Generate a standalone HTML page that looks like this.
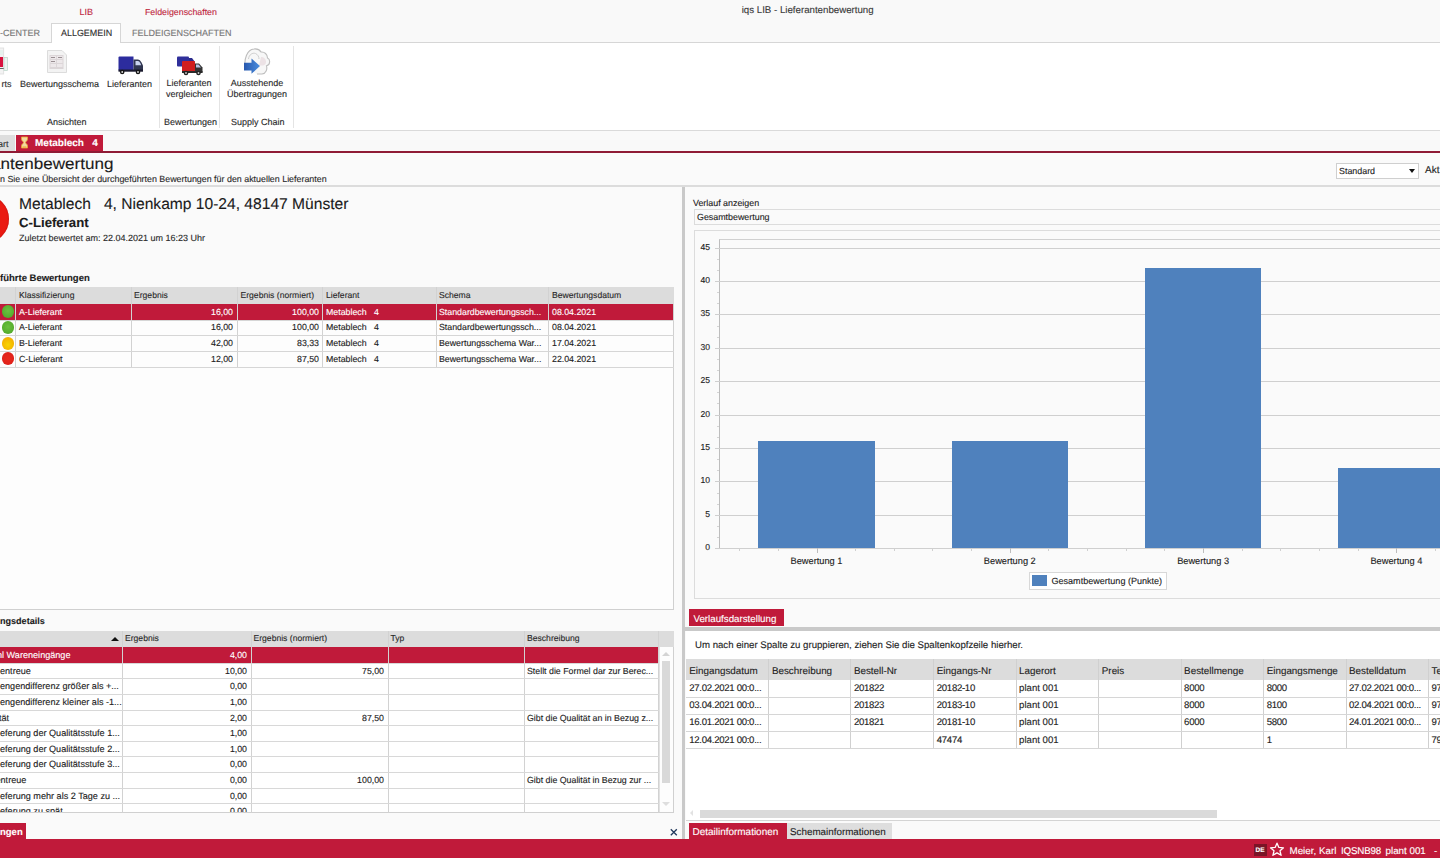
<!DOCTYPE html>
<html><head><meta charset="utf-8">
<style>
*{box-sizing:border-box;margin:0;padding:0}
html,body{width:1440px;height:858px;overflow:hidden}
body{position:relative;background:#fafafa;font-family:"Liberation Sans",sans-serif;color:#222;font-size:9px;line-height:1.15}
.a{position:absolute;white-space:nowrap;text-rendering:geometricPrecision;-webkit-text-stroke:0.12px currentColor}
</style></head><body>
<div class="a" style="left:0px;top:0px;width:1440px;height:42px;background:#f9f9f9;"></div>
<div class="a" style="left:79.5px;top:6.5px;font-size:9px;color:#c0283f;">LIB</div>
<div class="a" style="left:145px;top:6.5px;font-size:8.8px;color:#c0283f;">Feldeigenschaften</div>
<div class="a" style="left:741.7px;top:5.2px;font-size:9.7px;color:#3a3a3a;">iqs LIB - Lieferantenbewertung</div>
<div class="a" style="left:0px;top:28px;font-size:9px;color:#777;">-CENTER</div>
<div class="a" style="left:51px;top:23px;width:70px;height:20px;background:#fff;border:1px solid #d6d6d6;border-bottom:none"></div>
<div class="a" style="left:61px;top:28px;font-size:8.95px;color:#2e2e2e;">ALLGEMEIN</div>
<div class="a" style="left:132px;top:28px;font-size:9px;color:#777;">FELDEIGENSCHAFTEN</div>
<div class="a" style="left:0px;top:42px;width:1440px;height:89px;background:#fff;border-top:1px solid #d6d6d6;border-bottom:1px solid #dadada"></div>
<div class="a" style="left:52px;top:42px;width:68px;height:2px;background:#fff;"></div>
<div class="a" style="left:159px;top:46px;width:1px;height:82px;background:#e4e4e4;"></div>
<div class="a" style="left:219px;top:46px;width:1px;height:82px;background:#e4e4e4;"></div>
<div class="a" style="left:293px;top:46px;width:1px;height:82px;background:#e4e4e4;"></div>
<div class="a" style="left:1.5px;top:79px;font-size:9px;color:#2a2a2a;">rts</div>
<div class="a" style="left:20px;top:79px;font-size:9px;color:#2a2a2a;">Bewertungsschema</div>
<div class="a" style="left:107px;top:79px;font-size:9px;color:#2a2a2a;">Lieferanten</div>
<div class="a" style="left:166px;top:78px;font-size:9px;color:#2a2a2a;text-align:center;line-height:10.5px">Lieferanten<br>vergleichen</div>
<div class="a" style="left:227px;top:78px;font-size:9px;color:#2a2a2a;text-align:center;line-height:10.5px">Ausstehende<br>Übertragungen</div>
<div class="a" style="left:47px;top:116.5px;font-size:9px;color:#2a2a2a;">Ansichten</div>
<div class="a" style="left:164px;top:116.5px;font-size:9px;color:#2a2a2a;">Bewertungen</div>
<div class="a" style="left:231px;top:116.5px;font-size:9px;color:#2a2a2a;">Supply Chain</div>
<div class="a" style="left:0px;top:131px;width:1440px;height:20px;background:#f9f9f9;"></div>
<div class="a" style="left:0px;top:135px;width:15px;height:16px;background:#dedede;"></div>
<div class="a" style="left:-2px;top:139px;font-size:9px;color:#333;">art</div>
<div class="a" style="left:16px;top:134.5px;width:87px;height:17.5px;background:#c01a3a;"></div>
<div class="a" style="left:35px;top:138px;font-size:10px;color:#fff;font-weight:bold">Metablech&nbsp;&nbsp;&nbsp;4</div>
<div class="a" style="left:0px;top:150.9px;width:1440px;height:2.2px;background:#8f1b35;"></div>

<svg class="a" style="left:0;top:46px" width="10" height="30" viewBox="0 0 10 30">
 <rect x="-8" y="2" width="11.7" height="26" fill="#f3f3f3" stroke="#ddd" stroke-width="0.8"/>
 <rect x="-8" y="4" width="11" height="5" fill="#e6f2ee"/>
 <rect x="-8" y="11" width="11" height="10" fill="#d8123e"/>
 <rect x="-8" y="22" width="13" height="1" fill="#666"/>
 <rect x="4" y="11.5" width="3.6" height="13" fill="#eef3f0" stroke="#b8d4c8" stroke-width="0.7"/>
</svg>
<svg class="a" style="left:46px;top:49px" width="22" height="25" viewBox="0 0 22 25">
 <path d="M1.5 1.5 H16 L20.5 6 V23.5 H1.5 Z" fill="#f3f3f3" stroke="#dcdcdc" stroke-width="1"/>
 <rect x="3.5" y="6" width="14" height="14" fill="#dcd6d8"/>
 <rect x="4.5" y="7" width="5.5" height="3" fill="#ede8ea"/><rect x="11" y="7" width="5.5" height="3" fill="#ede8ea"/>
 <rect x="4.5" y="11" width="5.5" height="3" fill="#ede8ea"/><rect x="11" y="11" width="5.5" height="3" fill="#ede8ea"/>
 <rect x="4.5" y="15" width="5.5" height="3" fill="#ede8ea"/><rect x="11" y="15" width="5.5" height="3" fill="#ede8ea"/>
 <rect x="5" y="8" width="4" height="1" fill="#9a8f93"/><rect x="12" y="8" width="4" height="1" fill="#9a8f93"/><rect x="5" y="12" width="4" height="1" fill="#9a8f93"/>
</svg>
<svg class="a" style="left:117px;top:55px" width="28" height="21" viewBox="0 0 28 21">
 <path d="M1.5 2.5 Q1.5 1.5 2.5 1.5 H16.5 V15.5 H1.5 Z" fill="#2c2c9e"/>
 <path d="M16.5 4.5 H21 Q23 4.5 24.5 7.5 L26 10.5 V16 H16.5 Z" fill="#2f3550"/>
 <path d="M18.5 6 H21 Q22.3 6 23.3 8 L24.2 10.2 H18.5 Z" fill="#c8d2ee"/>
 <rect x="1.5" y="14.5" width="24.5" height="2.2" fill="#1a1a2e"/>
 <circle cx="5.2" cy="17" r="2.3" fill="#151515"/><circle cx="5.2" cy="17" r="0.9" fill="#ddd"/>
 <circle cx="21" cy="17" r="2.3" fill="#151515"/><circle cx="21" cy="17" r="0.9" fill="#ddd"/>
</svg>
<svg class="a" style="left:176px;top:56px" width="27" height="20" viewBox="0 0 27 20">
 <rect x="1" y="0.5" width="12" height="10" rx="1" fill="#2f2f9a"/>
 <path d="M13 2 H16 L19 6 V11 H13 Z" fill="#2b2b8c"/>
 <rect x="6" y="5" width="13" height="11" rx="1" fill="#d01e1e"/>
 <path d="M19 7.5 H23 L26.5 11.5 V16.5 H19 Z" fill="#333"/>
 <path d="M20 8.5 H22.5 L25 11.5 H20 Z" fill="#b9c4e6"/>
 <rect x="6" y="15" width="20.5" height="2" fill="#2a2a2a"/>
 <circle cx="10" cy="17" r="2.3" fill="#222"/><circle cx="10" cy="17" r="0.9" fill="#ccc"/>
 <circle cx="22.5" cy="17" r="2.3" fill="#222"/><circle cx="22.5" cy="17" r="0.9" fill="#ccc"/>
</svg>
<svg class="a" style="left:235px;top:45px" width="45" height="33" viewBox="0 0 45 33">
 <path d="M10 22 C9 14 12 4.5 19 4 C23 3.5 25 5.5 26 7 C29.5 6.5 32.5 9.5 32.5 13 C35.5 14 35.5 20 31.5 20.8 C32.5 24 31 28.5 27 29 L22 29" fill="#f7f7f7" stroke="#bdbdbd" stroke-width="1.1"/>
 <path d="M26 12 C29 12 31 14 31 17 C31 19 30 20 28 20.5 L24 20.5 Z" fill="#ece2e5"/>
 <path d="M13.5 14 C14 9.5 17.5 7.5 20.5 8.5 C23 9.5 24 12 24 14" fill="none" stroke="#cfcfcf" stroke-width="1"/>
 <defs><linearGradient id="ag" x1="0" y1="0" x2="1" y2="0"><stop offset="0" stop-color="#2757ad"/><stop offset="1" stop-color="#4b8ede"/></linearGradient></defs>
 <path d="M9 17.8 H16.5 V13.5 L25 21 L16.5 28.8 V25.5 H9 Z" fill="url(#ag)"/>
</svg>
<svg class="a" style="left:20px;top:136px" width="9" height="13" viewBox="0 0 9 13">
 <path d="M1.5 1 H7.5 V3 C7.5 5 5.5 5.5 5.5 6.5 C5.5 7.5 7.5 8 7.5 10 V12 H1.5 V10 C1.5 8 3.5 7.5 3.5 6.5 C3.5 5.5 1.5 5 1.5 3 Z" fill="#f3d9a0" stroke="#e8a830" stroke-width="0.8"/>
 <path d="M2.5 10.5 H6.5 V11.5 H2.5 Z" fill="#e8a830"/>
</svg>

<div class="a" style="left:0px;top:153.2px;width:1440px;height:32px;background:#fafafa;"></div>
<div class="a" style="left:-9.2px;top:155.5px;font-size:15.8px;color:#1a1a1a;transform:scaleX(1.08);transform-origin:0 0">antenbewertung</div>
<div class="a" style="left:0px;top:174px;font-size:8.9px;color:#2a2a2a;">n Sie eine Übersicht der durchgeführten Bewertungen für den aktuellen Lieferanten</div>
<div class="a" style="left:1336px;top:162.5px;width:83px;height:16.5px;background:#fff;border:1px solid #cfcfcf"></div>
<div class="a" style="left:1339px;top:165.5px;font-size:8.9px;color:#222;">Standard</div>
<div class="a" style="left:1409px;top:168.5px;width:0;height:0;border-left:3.5px solid transparent;border-right:3.5px solid transparent;border-top:4px solid #111"></div>
<div class="a" style="left:1425px;top:164.5px;font-size:10px;color:#222;">Akt</div>
<div class="a" style="left:0px;top:185px;width:1440px;height:2px;background:#dcdcdc;"></div>
<div class="a" style="left:0px;top:187px;width:674px;height:423px;background:#fafafa;"></div>
<div class="a" style="left:-38.8px;top:195.1px;width:48.2px;height:48.2px;border-radius:50%;background:#ea1a12;box-shadow:inset 0 0 1.5px #a00"></div>
<div class="a" style="left:19px;top:195.5px;font-size:15.6px;color:#1a1a1a;">Metablech&nbsp;&nbsp;&nbsp;4, Nienkamp 10-24, 48147 Münster</div>
<div class="a" style="left:19px;top:214.7px;font-size:13.2px;color:#1a1a1a;font-weight:bold">C-Lieferant</div>
<div class="a" style="left:19px;top:232.5px;font-size:9px;color:#2a2a2a;">Zuletzt bewertet am: 22.04.2021 um 16:23 Uhr</div>
<div class="a" style="left:0px;top:273.5px;font-size:9.5px;color:#1a1a1a;font-weight:bold">führte Bewertungen</div>
<div class="a" style="left:0px;top:287px;width:674px;height:322.5px;background:#fdfdfd;border-right:1px solid #d0d0d0;border-bottom:1px solid #d0d0d0"></div>
<div class="a" style="left:0px;top:287px;width:674px;height:17px;background:#dcdcdc;"></div>
<div class="a" style="left:0px;top:304px;width:673px;height:15.5px;background:#c01a3a;"></div>
<div class="a" style="left:15.2px;top:287px;width:1px;height:80px;background:#d2d2d2;"></div>
<div class="a" style="left:130.6px;top:287px;width:1px;height:80px;background:#d2d2d2;"></div>
<div class="a" style="left:237px;top:287px;width:1px;height:80px;background:#d2d2d2;"></div>
<div class="a" style="left:321.8px;top:287px;width:1px;height:80px;background:#d2d2d2;"></div>
<div class="a" style="left:435.7px;top:287px;width:1px;height:80px;background:#d2d2d2;"></div>
<div class="a" style="left:548.3px;top:287px;width:1px;height:80px;background:#d2d2d2;"></div>
<div class="a" style="left:0px;top:319.5px;width:674px;height:1px;background:#d6d6d6;"></div>
<div class="a" style="left:0px;top:335.2px;width:674px;height:1px;background:#d6d6d6;"></div>
<div class="a" style="left:0px;top:350.9px;width:674px;height:1px;background:#d6d6d6;"></div>
<div class="a" style="left:0px;top:366.5px;width:674px;height:1px;background:#d6d6d6;"></div>
<div class="a" style="left:19px;top:291.2px;font-size:8.6px;color:#2a2a2a;">Klassifizierung</div>
<div class="a" style="left:134px;top:291.2px;font-size:8.6px;color:#2a2a2a;">Ergebnis</div>
<div class="a" style="left:240.5px;top:291.2px;font-size:8.6px;color:#2a2a2a;">Ergebnis (normiert)</div>
<div class="a" style="left:326px;top:291.2px;font-size:8.6px;color:#2a2a2a;">Lieferant</div>
<div class="a" style="left:439px;top:291.2px;font-size:8.6px;color:#2a2a2a;">Schema</div>
<div class="a" style="left:552px;top:291.2px;font-size:8.6px;color:#2a2a2a;">Bewertungsdatum</div>
<div class="a" style="left:1.6px;top:305.40px;width:12.8px;height:12.8px;border-radius:50%;background:radial-gradient(circle at 50% 45%,#6cc040 0,#58b030 60%,#4a9a28 100%)"></div>
<div class="a" style="left:19px;top:306.80px;font-size:8.8px;color:#fff;">A-Lieferant</div>
<div class="a" style="left:131px;top:306.80px;font-size:8.8px;color:#fff;width:102px;text-align:right">16,00</div>
<div class="a" style="left:237px;top:306.80px;font-size:8.8px;color:#fff;width:82px;text-align:right">100,00</div>
<div class="a" style="left:326px;top:306.80px;font-size:8.8px;color:#fff;">Metablech&nbsp;&nbsp;&nbsp;4</div>
<div class="a" style="left:439px;top:306.80px;font-size:8.8px;color:#fff;">Standardbewertungssch...</div>
<div class="a" style="left:552px;top:306.80px;font-size:8.8px;color:#fff;">08.04.2021</div>
<div class="a" style="left:1.6px;top:321.07px;width:12.8px;height:12.8px;border-radius:50%;background:radial-gradient(circle at 50% 45%,#6cc040 0,#58b030 60%,#4a9a28 100%)"></div>
<div class="a" style="left:19px;top:322.47px;font-size:8.8px;color:#222;">A-Lieferant</div>
<div class="a" style="left:131px;top:322.47px;font-size:8.8px;color:#222;width:102px;text-align:right">16,00</div>
<div class="a" style="left:237px;top:322.47px;font-size:8.8px;color:#222;width:82px;text-align:right">100,00</div>
<div class="a" style="left:326px;top:322.47px;font-size:8.8px;color:#222;">Metablech&nbsp;&nbsp;&nbsp;4</div>
<div class="a" style="left:439px;top:322.47px;font-size:8.8px;color:#222;">Standardbewertungssch...</div>
<div class="a" style="left:552px;top:322.47px;font-size:8.8px;color:#222;">08.04.2021</div>
<div class="a" style="left:1.6px;top:336.74px;width:12.8px;height:12.8px;border-radius:50%;background:radial-gradient(circle at 50% 60%,#f8d400 0,#f5b800 55%,#eea010 100%)"></div>
<div class="a" style="left:19px;top:338.14px;font-size:8.8px;color:#222;">B-Lieferant</div>
<div class="a" style="left:131px;top:338.14px;font-size:8.8px;color:#222;width:102px;text-align:right">42,00</div>
<div class="a" style="left:237px;top:338.14px;font-size:8.8px;color:#222;width:82px;text-align:right">83,33</div>
<div class="a" style="left:326px;top:338.14px;font-size:8.8px;color:#222;">Metablech&nbsp;&nbsp;&nbsp;4</div>
<div class="a" style="left:439px;top:338.14px;font-size:8.8px;color:#222;">Bewertungsschema War...</div>
<div class="a" style="left:552px;top:338.14px;font-size:8.8px;color:#222;">17.04.2021</div>
<div class="a" style="left:1.6px;top:352.41px;width:12.8px;height:12.8px;border-radius:50%;background:radial-gradient(circle at 50% 50%,#e8281c 0,#e2221a 60%,#c81a18 100%)"></div>
<div class="a" style="left:19px;top:353.81px;font-size:8.8px;color:#222;">C-Lieferant</div>
<div class="a" style="left:131px;top:353.81px;font-size:8.8px;color:#222;width:102px;text-align:right">12,00</div>
<div class="a" style="left:237px;top:353.81px;font-size:8.8px;color:#222;width:82px;text-align:right">87,50</div>
<div class="a" style="left:326px;top:353.81px;font-size:8.8px;color:#222;">Metablech&nbsp;&nbsp;&nbsp;4</div>
<div class="a" style="left:439px;top:353.81px;font-size:8.8px;color:#222;">Bewertungsschema War...</div>
<div class="a" style="left:552px;top:353.81px;font-size:8.8px;color:#222;">22.04.2021</div>
<div class="a" style="left:0px;top:615.8px;font-size:9.05px;color:#1a1a1a;font-weight:bold">ngsdetails</div>
<div class="a" style="left:0px;top:630.5px;width:674px;height:182px;background:#fff;border-right:1px solid #d0d0d0;border-bottom:1px solid #d0d0d0"></div>
<div class="a" style="left:0px;top:630.5px;width:674px;height:16.7px;background:#dcdcdc;"></div>
<div class="a" style="left:0px;top:647.2px;width:658.5px;height:15.4px;background:#c01a3a;"></div>
<div class="a" style="left:110.5px;top:636.5px;width:0;height:0;border-left:4px solid transparent;border-right:4px solid transparent;border-bottom:4.5px solid #111"></div>
<div class="a" style="left:121.9px;top:630.5px;width:1px;height:182px;background:#d2d2d2;"></div>
<div class="a" style="left:251px;top:630.5px;width:1px;height:182px;background:#d2d2d2;"></div>
<div class="a" style="left:387.5px;top:630.5px;width:1px;height:182px;background:#d2d2d2;"></div>
<div class="a" style="left:523.6px;top:630.5px;width:1px;height:182px;background:#d2d2d2;"></div>
<div class="a" style="left:658.3px;top:630.5px;width:1px;height:182px;background:#d2d2d2;"></div>
<div class="a" style="left:0px;top:662.80px;width:658.5px;height:1px;background:#d8d8d8;"></div>
<div class="a" style="left:0px;top:678.40px;width:658.5px;height:1px;background:#d8d8d8;"></div>
<div class="a" style="left:0px;top:694.00px;width:658.5px;height:1px;background:#d8d8d8;"></div>
<div class="a" style="left:0px;top:709.60px;width:658.5px;height:1px;background:#d8d8d8;"></div>
<div class="a" style="left:0px;top:725.20px;width:658.5px;height:1px;background:#d8d8d8;"></div>
<div class="a" style="left:0px;top:740.80px;width:658.5px;height:1px;background:#d8d8d8;"></div>
<div class="a" style="left:0px;top:756.40px;width:658.5px;height:1px;background:#d8d8d8;"></div>
<div class="a" style="left:0px;top:772.00px;width:658.5px;height:1px;background:#d8d8d8;"></div>
<div class="a" style="left:0px;top:787.60px;width:658.5px;height:1px;background:#d8d8d8;"></div>
<div class="a" style="left:0px;top:803.20px;width:658.5px;height:1px;background:#d8d8d8;"></div>
<div class="a" style="left:125px;top:634px;font-size:8.6px;color:#2a2a2a;">Ergebnis</div>
<div class="a" style="left:253.5px;top:634px;font-size:8.6px;color:#2a2a2a;">Ergebnis (normiert)</div>
<div class="a" style="left:390.5px;top:634px;font-size:8.6px;color:#2a2a2a;">Typ</div>
<div class="a" style="left:527px;top:634px;font-size:8.6px;color:#2a2a2a;">Beschreibung</div>
<div class="a" style="left:0;top:647.2px;width:658.5px;height:165px;overflow:hidden">
<div class="a" style="left:0px;top:3.10px;font-size:9.1px;color:#fff;"><span style="margin-left:-3px">hl</span> Wareneingänge</div>
<div class="a" style="left:123px;top:3.10px;font-size:8.8px;color:#fff;width:124px;text-align:right">4,00</div>
<div class="a" style="left:0px;top:18.70px;font-size:9.1px;color:#222;">entreue</div>
<div class="a" style="left:123px;top:18.70px;font-size:8.8px;color:#222;width:124px;text-align:right">10,00</div>
<div class="a" style="left:252px;top:18.70px;font-size:8.8px;color:#222;width:132px;text-align:right">75,00</div>
<div class="a" style="left:527px;top:18.70px;font-size:8.8px;color:#222;">Stellt die Formel dar zur Berec...</div>
<div class="a" style="left:0px;top:34.30px;font-size:9.1px;color:#222;">engendifferenz größer als +...</div>
<div class="a" style="left:123px;top:34.30px;font-size:8.8px;color:#222;width:124px;text-align:right">0,00</div>
<div class="a" style="left:0px;top:49.90px;font-size:9.1px;color:#222;">engendifferenz kleiner als -1...</div>
<div class="a" style="left:123px;top:49.90px;font-size:8.8px;color:#222;width:124px;text-align:right">1,00</div>
<div class="a" style="left:0px;top:65.50px;font-size:9.1px;color:#222;"><span style="margin-left:-1px">tät</span></div>
<div class="a" style="left:123px;top:65.50px;font-size:8.8px;color:#222;width:124px;text-align:right">2,00</div>
<div class="a" style="left:252px;top:65.50px;font-size:8.8px;color:#222;width:132px;text-align:right">87,50</div>
<div class="a" style="left:527px;top:65.50px;font-size:8.8px;color:#222;">Gibt die Qualität an in Bezug z...</div>
<div class="a" style="left:0px;top:81.10px;font-size:9.1px;color:#222;">eferung der Qualitätsstufe 1...</div>
<div class="a" style="left:123px;top:81.10px;font-size:8.8px;color:#222;width:124px;text-align:right">1,00</div>
<div class="a" style="left:0px;top:96.70px;font-size:9.1px;color:#222;">eferung der Qualitätsstufe 2...</div>
<div class="a" style="left:123px;top:96.70px;font-size:8.8px;color:#222;width:124px;text-align:right">1,00</div>
<div class="a" style="left:0px;top:112.30px;font-size:9.1px;color:#222;">eferung der Qualitätsstufe 3...</div>
<div class="a" style="left:123px;top:112.30px;font-size:8.8px;color:#222;width:124px;text-align:right">0,00</div>
<div class="a" style="left:0px;top:127.90px;font-size:9.1px;color:#222;"><span style="margin-left:-4.5px">entreue</span></div>
<div class="a" style="left:123px;top:127.90px;font-size:8.8px;color:#222;width:124px;text-align:right">0,00</div>
<div class="a" style="left:252px;top:127.90px;font-size:8.8px;color:#222;width:132px;text-align:right">100,00</div>
<div class="a" style="left:527px;top:127.90px;font-size:8.8px;color:#222;">Gibt die Qualität in Bezug zur ...</div>
<div class="a" style="left:0px;top:143.50px;font-size:9.1px;color:#222;">eferung mehr als 2 Tage zu ...</div>
<div class="a" style="left:123px;top:143.50px;font-size:8.8px;color:#222;width:124px;text-align:right">0,00</div>
<div class="a" style="left:0px;top:159.10px;font-size:9.1px;color:#222;">eferung zu spät</div>
<div class="a" style="left:123px;top:159.10px;font-size:8.8px;color:#222;width:124px;text-align:right">0,00</div>
</div>
<div class="a" style="left:658.5px;top:647.2px;width:14.5px;height:164.5px;background:#fdfdfd;border-left:1px solid #e2e2e2"></div>
<div class="a" style="left:662px;top:652px;width:0;height:0;border-left:4px solid transparent;border-right:4px solid transparent;border-bottom:4px solid #d4d4d4"></div>
<div class="a" style="left:662px;top:661px;width:7.5px;height:122px;background:#d9d9d9;"></div>
<div class="a" style="left:662px;top:802px;width:0;height:0;border-left:4px solid transparent;border-right:4px solid transparent;border-top:4px solid #dedede"></div>
<div class="a" style="left:0px;top:823px;width:26px;height:16px;background:#c01a3a;"></div>
<div class="a" style="left:0px;top:828px;font-size:9.5px;color:#fff;font-weight:bold">ngen</div>
<svg class="a" style="left:669px;top:828px" width="10" height="9" viewBox="0 0 10 9"><path d="M1.8 1.2 L7.8 7.2 M7.8 1.2 L1.8 7.2" stroke="#233a5e" stroke-width="1.3"/></svg>
<div class="a" style="left:682px;top:187px;width:3px;height:652px;background:#c9c9c9;"></div>
<div class="a" style="left:693px;top:197.5px;font-size:8.9px;color:#222;">Verlauf anzeigen</div>
<div class="a" style="left:693.5px;top:209.3px;width:760px;height:15.5px;background:#fafafa;border:1px solid #dcdcdc"></div>
<div class="a" style="left:697px;top:212px;font-size:8.9px;color:#1e1e1e;">Gesamtbewertung</div>
<div class="a" style="left:693.5px;top:230.2px;width:760px;height:368.5px;background:#fafafa;border:1px solid #dcdcdc"></div>
<div class="a" style="left:719px;top:239.4px;width:730px;height:309px;border-left:1px solid #bdbdbd;border-top:1px solid #d0d0d0"></div>
<div class="a" style="left:715px;top:548.20px;width:735px;height:1px;background:#cfcfcf;"></div>
<div class="a" style="left:690px;top:543.20px;font-size:8.6px;color:#222;width:20px;text-align:right">0</div>
<div class="a" style="left:715px;top:514.80px;width:735px;height:1px;background:#cfcfcf;"></div>
<div class="a" style="left:690px;top:509.80px;font-size:8.6px;color:#222;width:20px;text-align:right">5</div>
<div class="a" style="left:715px;top:481.40px;width:735px;height:1px;background:#cfcfcf;"></div>
<div class="a" style="left:690px;top:476.40px;font-size:8.6px;color:#222;width:20px;text-align:right">10</div>
<div class="a" style="left:715px;top:448.00px;width:735px;height:1px;background:#cfcfcf;"></div>
<div class="a" style="left:690px;top:443.00px;font-size:8.6px;color:#222;width:20px;text-align:right">15</div>
<div class="a" style="left:715px;top:414.60px;width:735px;height:1px;background:#cfcfcf;"></div>
<div class="a" style="left:690px;top:409.60px;font-size:8.6px;color:#222;width:20px;text-align:right">20</div>
<div class="a" style="left:715px;top:381.20px;width:735px;height:1px;background:#cfcfcf;"></div>
<div class="a" style="left:690px;top:376.20px;font-size:8.6px;color:#222;width:20px;text-align:right">25</div>
<div class="a" style="left:715px;top:347.80px;width:735px;height:1px;background:#cfcfcf;"></div>
<div class="a" style="left:690px;top:342.80px;font-size:8.6px;color:#222;width:20px;text-align:right">30</div>
<div class="a" style="left:715px;top:314.40px;width:735px;height:1px;background:#cfcfcf;"></div>
<div class="a" style="left:690px;top:309.40px;font-size:8.6px;color:#222;width:20px;text-align:right">35</div>
<div class="a" style="left:715px;top:281.00px;width:735px;height:1px;background:#cfcfcf;"></div>
<div class="a" style="left:690px;top:276.00px;font-size:8.6px;color:#222;width:20px;text-align:right">40</div>
<div class="a" style="left:715px;top:247.60px;width:735px;height:1px;background:#cfcfcf;"></div>
<div class="a" style="left:690px;top:242.60px;font-size:8.6px;color:#222;width:20px;text-align:right">45</div>
<div class="a" style="left:717px;top:537.07px;width:2px;height:1px;background:#d4d4d4;"></div>
<div class="a" style="left:717px;top:525.93px;width:2px;height:1px;background:#d4d4d4;"></div>
<div class="a" style="left:717px;top:503.67px;width:2px;height:1px;background:#d4d4d4;"></div>
<div class="a" style="left:717px;top:492.53px;width:2px;height:1px;background:#d4d4d4;"></div>
<div class="a" style="left:717px;top:470.27px;width:2px;height:1px;background:#d4d4d4;"></div>
<div class="a" style="left:717px;top:459.13px;width:2px;height:1px;background:#d4d4d4;"></div>
<div class="a" style="left:717px;top:436.87px;width:2px;height:1px;background:#d4d4d4;"></div>
<div class="a" style="left:717px;top:425.73px;width:2px;height:1px;background:#d4d4d4;"></div>
<div class="a" style="left:717px;top:403.47px;width:2px;height:1px;background:#d4d4d4;"></div>
<div class="a" style="left:717px;top:392.33px;width:2px;height:1px;background:#d4d4d4;"></div>
<div class="a" style="left:717px;top:370.07px;width:2px;height:1px;background:#d4d4d4;"></div>
<div class="a" style="left:717px;top:358.93px;width:2px;height:1px;background:#d4d4d4;"></div>
<div class="a" style="left:717px;top:336.67px;width:2px;height:1px;background:#d4d4d4;"></div>
<div class="a" style="left:717px;top:325.53px;width:2px;height:1px;background:#d4d4d4;"></div>
<div class="a" style="left:717px;top:303.27px;width:2px;height:1px;background:#d4d4d4;"></div>
<div class="a" style="left:717px;top:292.13px;width:2px;height:1px;background:#d4d4d4;"></div>
<div class="a" style="left:717px;top:269.87px;width:2px;height:1px;background:#d4d4d4;"></div>
<div class="a" style="left:717px;top:258.73px;width:2px;height:1px;background:#d4d4d4;"></div>
<div class="a" style="left:758.20px;top:441.32px;width:116.6px;height:106.88px;background:#4f81bd;"></div>
<div class="a" style="left:951.50px;top:441.32px;width:116.6px;height:106.88px;background:#4f81bd;"></div>
<div class="a" style="left:1144.80px;top:267.64px;width:116.6px;height:280.56px;background:#4f81bd;"></div>
<div class="a" style="left:1338.10px;top:468.04px;width:116.6px;height:80.16px;background:#4f81bd;"></div>
<div class="a" style="left:816.50px;top:548.2px;width:1px;height:5px;background:#bdbdbd;"></div>
<div class="a" style="left:739.18px;top:548.2px;width:1px;height:3px;background:#d0d0d0;"></div>
<div class="a" style="left:777.84px;top:548.2px;width:1px;height:3px;background:#d0d0d0;"></div>
<div class="a" style="left:855.16px;top:548.2px;width:1px;height:3px;background:#d0d0d0;"></div>
<div class="a" style="left:893.82px;top:548.2px;width:1px;height:3px;background:#d0d0d0;"></div>
<div class="a" style="left:1009.80px;top:548.2px;width:1px;height:5px;background:#bdbdbd;"></div>
<div class="a" style="left:932.48px;top:548.2px;width:1px;height:3px;background:#d0d0d0;"></div>
<div class="a" style="left:971.14px;top:548.2px;width:1px;height:3px;background:#d0d0d0;"></div>
<div class="a" style="left:1048.46px;top:548.2px;width:1px;height:3px;background:#d0d0d0;"></div>
<div class="a" style="left:1087.12px;top:548.2px;width:1px;height:3px;background:#d0d0d0;"></div>
<div class="a" style="left:1203.10px;top:548.2px;width:1px;height:5px;background:#bdbdbd;"></div>
<div class="a" style="left:1125.78px;top:548.2px;width:1px;height:3px;background:#d0d0d0;"></div>
<div class="a" style="left:1164.44px;top:548.2px;width:1px;height:3px;background:#d0d0d0;"></div>
<div class="a" style="left:1241.76px;top:548.2px;width:1px;height:3px;background:#d0d0d0;"></div>
<div class="a" style="left:1280.42px;top:548.2px;width:1px;height:3px;background:#d0d0d0;"></div>
<div class="a" style="left:1396.40px;top:548.2px;width:1px;height:5px;background:#bdbdbd;"></div>
<div class="a" style="left:1319.08px;top:548.2px;width:1px;height:3px;background:#d0d0d0;"></div>
<div class="a" style="left:1357.74px;top:548.2px;width:1px;height:3px;background:#d0d0d0;"></div>
<div class="a" style="left:1435.06px;top:548.2px;width:1px;height:3px;background:#d0d0d0;"></div>
<div class="a" style="left:1473.72px;top:548.2px;width:1px;height:3px;background:#d0d0d0;"></div>
<div class="a" style="left:1589.70px;top:548.2px;width:1px;height:5px;background:#bdbdbd;"></div>
<div class="a" style="left:1512.38px;top:548.2px;width:1px;height:3px;background:#d0d0d0;"></div>
<div class="a" style="left:1551.04px;top:548.2px;width:1px;height:3px;background:#d0d0d0;"></div>
<div class="a" style="left:1628.36px;top:548.2px;width:1px;height:3px;background:#d0d0d0;"></div>
<div class="a" style="left:1667.02px;top:548.2px;width:1px;height:3px;background:#d0d0d0;"></div>
<div class="a" style="left:776.5px;top:556px;font-size:9.25px;color:#222;width:80px;text-align:center">Bewertung 1</div>
<div class="a" style="left:969.8px;top:556px;font-size:9.25px;color:#222;width:80px;text-align:center">Bewertung 2</div>
<div class="a" style="left:1163.1px;top:556px;font-size:9.25px;color:#222;width:80px;text-align:center">Bewertung 3</div>
<div class="a" style="left:1356.4px;top:556px;font-size:9.25px;color:#222;width:80px;text-align:center">Bewertung 4</div>
<div class="a" style="left:1028.5px;top:572px;width:138px;height:17.5px;background:#fff;border:1px solid #d8d8d8"></div>
<div class="a" style="left:1032px;top:575px;width:14.7px;height:11.3px;background:#4f81bd;"></div>
<div class="a" style="left:1051.5px;top:576px;font-size:9.05px;color:#222;">Gesamtbewertung (Punkte)</div>
<div class="a" style="left:689.3px;top:609px;width:94.5px;height:17px;background:#c01a3a;"></div>
<div class="a" style="left:693.5px;top:613.5px;font-size:9.74px;color:#fff;">Verlaufsdarstellung</div>
<div class="a" style="left:685px;top:627px;width:760px;height:3.7px;background:#c9c9c9;"></div>
<div class="a" style="left:685.5px;top:630.7px;width:760px;height:190px;background:#fff;"></div>
<div class="a" style="left:695px;top:639.5px;font-size:9.65px;color:#1e1e1e;">Um nach einer Spalte zu gruppieren, ziehen Sie die Spaltenkopfzeile hierher.</div>
<div class="a" style="left:686px;top:659px;width:760px;height:21px;background:#dcdcdc;"></div>
<div class="a" style="left:768.4px;top:659.2px;width:1px;height:89.5px;background:#d0d0d0;"></div>
<div class="a" style="left:850.4px;top:659.2px;width:1px;height:89.5px;background:#d0d0d0;"></div>
<div class="a" style="left:933.3px;top:659.2px;width:1px;height:89.5px;background:#d0d0d0;"></div>
<div class="a" style="left:1015.6px;top:659.2px;width:1px;height:89.5px;background:#d0d0d0;"></div>
<div class="a" style="left:1098.3px;top:659.2px;width:1px;height:89.5px;background:#d0d0d0;"></div>
<div class="a" style="left:1180.6px;top:659.2px;width:1px;height:89.5px;background:#d0d0d0;"></div>
<div class="a" style="left:1263.2px;top:659.2px;width:1px;height:89.5px;background:#d0d0d0;"></div>
<div class="a" style="left:1345.5px;top:659.2px;width:1px;height:89.5px;background:#d0d0d0;"></div>
<div class="a" style="left:1428px;top:659.2px;width:1px;height:89.5px;background:#d0d0d0;"></div>
<div class="a" style="left:685.8px;top:696.7px;width:760px;height:1px;background:#d6d6d6;"></div>
<div class="a" style="left:685.8px;top:714.0px;width:760px;height:1px;background:#d6d6d6;"></div>
<div class="a" style="left:685.8px;top:731.2px;width:760px;height:1px;background:#d6d6d6;"></div>
<div class="a" style="left:685.8px;top:748.4px;width:760px;height:1px;background:#d6d6d6;"></div>
<div class="a" style="left:689.3px;top:666px;font-size:9.85px;color:#1e1e1e;">Eingangsdatum</div>
<div class="a" style="left:771.9px;top:666px;font-size:9.85px;color:#1e1e1e;">Beschreibung</div>
<div class="a" style="left:853.9px;top:666px;font-size:9.85px;color:#1e1e1e;">Bestell-Nr</div>
<div class="a" style="left:936.8px;top:666px;font-size:9.85px;color:#1e1e1e;">Eingangs-Nr</div>
<div class="a" style="left:1019.1px;top:666px;font-size:9.85px;color:#1e1e1e;">Lagerort</div>
<div class="a" style="left:1101.8px;top:666px;font-size:9.85px;color:#1e1e1e;">Preis</div>
<div class="a" style="left:1184.1px;top:666px;font-size:9.85px;color:#1e1e1e;">Bestellmenge</div>
<div class="a" style="left:1266.7px;top:666px;font-size:9.85px;color:#1e1e1e;">Eingangsmenge</div>
<div class="a" style="left:1349.0px;top:666px;font-size:9.85px;color:#1e1e1e;">Bestelldatum</div>
<div class="a" style="left:1431.5px;top:666px;font-size:9.85px;color:#1e1e1e;">Te</div>
<div class="a" style="left:689.3px;top:682.90px;font-size:9.6px;color:#1e1e1e;letter-spacing:-0.3px">27.02.2021 00:0...</div>
<div class="a" style="left:853.9px;top:682.90px;font-size:9.6px;color:#1e1e1e;letter-spacing:-0.3px">201822</div>
<div class="a" style="left:936.8px;top:682.90px;font-size:9.6px;color:#1e1e1e;letter-spacing:-0.3px">20182-10</div>
<div class="a" style="left:1019.1px;top:682.90px;font-size:9.6px;color:#1e1e1e;">plant 001</div>
<div class="a" style="left:1184.1px;top:682.90px;font-size:9.6px;color:#1e1e1e;letter-spacing:-0.3px">8000</div>
<div class="a" style="left:1266.7px;top:682.90px;font-size:9.6px;color:#1e1e1e;letter-spacing:-0.3px">8000</div>
<div class="a" style="left:1349.0px;top:682.90px;font-size:9.6px;color:#1e1e1e;letter-spacing:-0.3px">27.02.2021 00:0...</div>
<div class="a" style="left:1431.5px;top:682.90px;font-size:9.6px;color:#1e1e1e;letter-spacing:-0.3px">97</div>
<div class="a" style="left:689.3px;top:700.12px;font-size:9.6px;color:#1e1e1e;letter-spacing:-0.3px">03.04.2021 00:0...</div>
<div class="a" style="left:853.9px;top:700.12px;font-size:9.6px;color:#1e1e1e;letter-spacing:-0.3px">201823</div>
<div class="a" style="left:936.8px;top:700.12px;font-size:9.6px;color:#1e1e1e;letter-spacing:-0.3px">20183-10</div>
<div class="a" style="left:1019.1px;top:700.12px;font-size:9.6px;color:#1e1e1e;">plant 001</div>
<div class="a" style="left:1184.1px;top:700.12px;font-size:9.6px;color:#1e1e1e;letter-spacing:-0.3px">8000</div>
<div class="a" style="left:1266.7px;top:700.12px;font-size:9.6px;color:#1e1e1e;letter-spacing:-0.3px">8100</div>
<div class="a" style="left:1349.0px;top:700.12px;font-size:9.6px;color:#1e1e1e;letter-spacing:-0.3px">02.04.2021 00:0...</div>
<div class="a" style="left:1431.5px;top:700.12px;font-size:9.6px;color:#1e1e1e;letter-spacing:-0.3px">97</div>
<div class="a" style="left:689.3px;top:717.34px;font-size:9.6px;color:#1e1e1e;letter-spacing:-0.3px">16.01.2021 00:0...</div>
<div class="a" style="left:853.9px;top:717.34px;font-size:9.6px;color:#1e1e1e;letter-spacing:-0.3px">201821</div>
<div class="a" style="left:936.8px;top:717.34px;font-size:9.6px;color:#1e1e1e;letter-spacing:-0.3px">20181-10</div>
<div class="a" style="left:1019.1px;top:717.34px;font-size:9.6px;color:#1e1e1e;">plant 001</div>
<div class="a" style="left:1184.1px;top:717.34px;font-size:9.6px;color:#1e1e1e;letter-spacing:-0.3px">6000</div>
<div class="a" style="left:1266.7px;top:717.34px;font-size:9.6px;color:#1e1e1e;letter-spacing:-0.3px">5800</div>
<div class="a" style="left:1349.0px;top:717.34px;font-size:9.6px;color:#1e1e1e;letter-spacing:-0.3px">24.01.2021 00:0...</div>
<div class="a" style="left:1431.5px;top:717.34px;font-size:9.6px;color:#1e1e1e;letter-spacing:-0.3px">97</div>
<div class="a" style="left:689.3px;top:734.56px;font-size:9.6px;color:#1e1e1e;letter-spacing:-0.3px">12.04.2021 00:0...</div>
<div class="a" style="left:936.8px;top:734.56px;font-size:9.6px;color:#1e1e1e;letter-spacing:-0.3px">47474</div>
<div class="a" style="left:1019.1px;top:734.56px;font-size:9.6px;color:#1e1e1e;">plant 001</div>
<div class="a" style="left:1266.7px;top:734.56px;font-size:9.6px;color:#1e1e1e;letter-spacing:-0.3px">1</div>
<div class="a" style="left:1431.5px;top:734.56px;font-size:9.6px;color:#1e1e1e;letter-spacing:-0.3px">79</div>
<div class="a" style="left:690px;top:810px;width:0px;height:0px;background:transparent;border-top:3.5px solid transparent;border-bottom:3.5px solid transparent;border-right:3.5px solid #e2e2e2"></div>
<div class="a" style="left:699.8px;top:809.6px;width:517.7px;height:8px;background:#dadada;"></div>
<div class="a" style="left:685.5px;top:820.2px;width:760px;height:1px;background:#d4d4d4;"></div>
<div class="a" style="left:685.5px;top:821px;width:760px;height:18px;background:#fafafa;"></div>
<div class="a" style="left:689.2px;top:822.8px;width:97.7px;height:16.5px;background:#c01a3a;"></div>
<div class="a" style="left:692.5px;top:827px;font-size:9.96px;color:#fff;">Detailinformationen</div>
<div class="a" style="left:786.9px;top:822.8px;width:105px;height:16.5px;background:#dedede;"></div>
<div class="a" style="left:790px;top:827px;font-size:9.84px;color:#1e1e1e;">Schemainformationen</div>
<div class="a" style="left:0px;top:839px;width:1440px;height:19px;background:#c01a3a;"></div>
<div class="a" style="left:1254px;top:844px;width:12.6px;height:12px;background:#7a1426;"></div>
<div class="a" style="left:1255.5px;top:846.5px;font-size:6.5px;color:#fff;font-weight:bold">DE</div>
<svg class="a" style="left:1269px;top:842px" width="16" height="15" viewBox="0 0 16 15"><path d="M8 1.2 L9.9 5.4 L14.5 5.8 L11 8.8 L12.1 13.3 L8 10.9 L3.9 13.3 L5 8.8 L1.5 5.8 L6.1 5.4 Z" fill="none" stroke="#fff" stroke-width="1.3" stroke-linejoin="round"/></svg>
<div class="a" style="left:1289.5px;top:845.5px;font-size:9.8px;color:#fff;">Meier, Karl</div>
<div class="a" style="left:1341px;top:845.5px;font-size:9.8px;color:#fff;letter-spacing:-0.2px">IQSNB98</div>
<div class="a" style="left:1385.5px;top:845.5px;font-size:9.8px;color:#fff;">plant 001</div>
<div class="a" style="left:1434px;top:845.5px;font-size:9.8px;color:#fff;">-</div>
</body></html>
